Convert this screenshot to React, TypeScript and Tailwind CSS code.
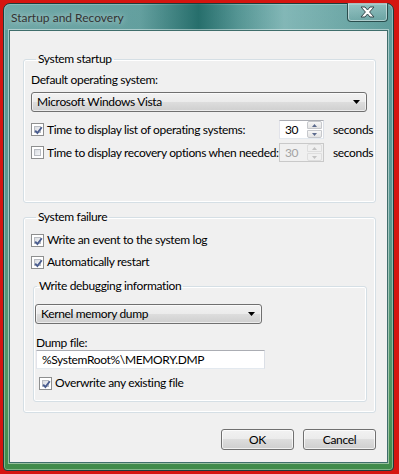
import React from 'react';

const font = { fontFamily: 'Lato, "Noto Sans", sans-serif' };

function CheckBox({ checked }: { checked?: boolean }) {
  return (
    <span className="relative inline-flex h-[13px] w-[13px] shrink-0 items-center justify-center border border-[#8e8f8f] bg-white p-[2px]">
      <span className="h-full w-full border border-[#b9bcc2] bg-[linear-gradient(135deg,#d9dce1_0%,#f4f5f7_100%)]" />
      {checked && (
        <svg className="absolute left-[1px] top-[1px]" width="11" height="11" viewBox="0 0 11 11">
          <path d="M2.2 5.6 L4.4 8 L8.8 2.2" fill="none" stroke="#4a5d8f" strokeWidth="1.9" />
        </svg>
      )}
    </span>
  );
}

function CheckRow({ checked, label }: { checked?: boolean; label: string }) {
  return (
    <div className="flex h-[16px] items-center">
      <CheckBox checked={checked} />
      <span className="ml-[3px] whitespace-nowrap leading-[16px]">{label}</span>
    </div>
  );
}

function Combo({ value, width }: { value: string; width: string }) {
  return (
    <div
      className={`flex h-[20px] ${width} items-center justify-between rounded-[3px] border border-[#707070] bg-[linear-gradient(#f2f2f2_0%,#ebebeb_50%,#dddddd_50%,#cfcfcf_100%)] pl-[5px] pr-[6px] shadow-[inset_0_0_0_1px_rgba(255,255,255,0.6)]`}
    >
      <span className="whitespace-nowrap leading-[16px]">{value}</span>
      <svg width="7" height="4" viewBox="0 0 7 4">
        <path d="M0 0 H7 L3.5 4 Z" fill="#000" />
      </svg>
    </div>
  );
}

function Spin({ value, disabled }: { value: string; disabled?: boolean }) {
  const arrow = disabled ? '#c3c3c3' : '#5b6a8d';
  return (
    <div
      className={`flex h-[19px] w-[45px] shrink-0 items-center justify-between border ${
        disabled
          ? 'border-[#c9c9c9] bg-[#f0f0f0] text-[#a3a3a3]'
          : 'border-[#abadb3] border-b-[#e3e9ef] border-l-[#e2e3ea] border-r-[#dbdfe6] bg-white text-black'
      }`}
    >
      <span className="pl-[5px] leading-[16px]">{value}</span>
      <div className="mr-[1px] flex h-[17px] w-[15px] flex-col">
        <div
          className={`flex h-[8px] items-center justify-center rounded-t-[2px] border ${
            disabled ? 'border-[#dedede]' : 'border-[#c6c8cc] bg-[linear-gradient(#f6f6f6,#e3e3e3)]'
          }`}
        >
          <svg width="5" height="3" viewBox="0 0 5 3">
            <path d="M0 3 L2.5 0 L5 3 Z" fill={arrow} />
          </svg>
        </div>
        <div
          className={`mt-[1px] flex h-[8px] items-center justify-center rounded-b-[2px] border ${
            disabled ? 'border-[#dedede]' : 'border-[#c6c8cc] bg-[linear-gradient(#f6f6f6,#e3e3e3)]'
          }`}
        >
          <svg width="5" height="3" viewBox="0 0 5 3">
            <path d="M0 0 L5 0 L2.5 3 Z" fill={arrow} />
          </svg>
        </div>
      </div>
    </div>
  );
}

function TimeRow({ checked, label, disabled }: { checked?: boolean; label: string; disabled?: boolean }) {
  return (
    <div className="flex h-[19px] items-center">
      <div className="flex w-[248px] shrink-0 items-center">
        <CheckBox checked={checked} />
        <span className="ml-[3px] whitespace-nowrap leading-[16px]">{label}</span>
      </div>
      <Spin value="30" disabled={disabled} />
      <span className="ml-[9px] whitespace-nowrap leading-[16px]">seconds</span>
    </div>
  );
}

function Button({ label }: { label: string }) {
  return (
    <button className="flex h-[21px] w-[73px] items-center justify-center rounded-[3px] border border-[#707070] bg-[linear-gradient(#f2f2f2_0%,#ebebeb_50%,#dddddd_50%,#cfcfcf_100%)] leading-[16px] text-black shadow-[inset_0_0_0_1px_rgba(255,255,255,0.7)]">
      {label}
    </button>
  );
}

export default function App() {
  return (
    <div className="h-[474px] w-[399px] bg-[#d51510] pb-[3px] pl-[3px] pr-[5px] pt-[3px] text-[12px] tracking-[-0.35px] text-black" style={font}>
      <div className="flex h-full w-full flex-col rounded-b-[4px] rounded-t-[7px] border border-[#1d3d3c] bg-[linear-gradient(180deg,#5f9d9c_0%,#5a9892_45%,#4f955f_85%,#3f8a49_100%)] px-[5px] pb-[7px] shadow-[inset_0_0_0_1px_rgba(255,255,255,0.35)]">
        {/* Title bar */}
        <div className="-mx-[5px] flex h-[26px] shrink-0 items-start justify-between rounded-t-[6px] bg-[linear-gradient(90deg,rgba(130,180,180,0.5)_0%,rgba(110,165,166,0.3)_35%,rgba(20,95,92,0.75)_50%,rgba(60,130,128,0.3)_60%,rgba(160,205,205,0.55)_72%,rgba(95,155,155,0.2)_100%)] pl-[7px] pr-[5px]">
          <span className="pt-[6px] text-[12px] leading-[16px] tracking-normal text-[#333] [text-shadow:0_0_6px_rgba(255,255,255,0.7)]">Startup and Recovery</span>
          <div className="-mt-[1px] flex h-[19px] w-[41px] items-center justify-center rounded-b-[4px] border border-t-0 border-[#2a4d4d] bg-[linear-gradient(rgba(200,230,230,0.45),rgba(120,170,170,0.35))] shadow-[inset_0_0_0_1px_rgba(255,255,255,0.45)]">
            <svg width="15" height="12" viewBox="0 0 15 12">
              <path
                d="M1 1 H5 L7.5 4 L10 1 H14 L9.6 6 L14 11 H10 L7.5 8 L5 11 H1 L5.4 6 Z"
                fill="#fff"
                stroke="#38494d"
                strokeWidth="1"
                strokeLinejoin="round"
              />
            </svg>
          </div>
        </div>

        {/* Client area */}
        <div className="flex min-w-0 flex-1 flex-col border border-[#3f6d6b] bg-[#f0f0f0] pl-[13px] pr-[11px] pt-[20px] shadow-[0_0_0_1px_rgba(255,255,255,0.45)]">
          <fieldset className="min-w-0 rounded-[3px] border border-[#d5dfe5] pb-[40px] pl-[7px] pr-[8px] pt-[5px] shadow-[inset_0_0_0_1px_#fff]">
            <legend className="ml-[5px] px-[2px] leading-[16px]">System startup</legend>
            <div className="leading-[16px]">Default operating system:</div>
            <div className="mt-[4px]">
              <Combo value="Microsoft Windows Vista" width="w-full" />
            </div>
            <div className="mt-[8px]">
              <TimeRow checked label="Time to display list of operating systems:" />
            </div>
            <div className="mt-[4px]">
              <TimeRow label="Time to display recovery options when needed:" disabled />
            </div>
          </fieldset>

          <fieldset className="mt-[6px] min-w-0 rounded-[3px] border border-[#d5dfe5] pb-[10px] pl-[7px] pr-[8px] pt-[7px] shadow-[inset_0_0_0_1px_#fff]">
            <legend className="ml-[5px] px-[2px] leading-[16px]">System failure</legend>
            <CheckRow checked label="Write an event to the system log" />
            <div className="mt-[6px]">
              <CheckRow checked label="Automatically restart" />
            </div>
            <fieldset className="ml-[2px] mt-[8px] min-w-0 rounded-[3px] border border-[#d5dfe5] pb-[10px] pl-[1px] pt-[10px] shadow-[inset_0_0_0_1px_#fff]">
              <legend className="ml-[2px] px-[2px] leading-[16px]">Write debugging information</legend>
              <Combo value="Kernel memory dump" width="w-[227px]" />
              <div className="ml-[1px] mt-[12px] leading-[14px]">Dump file:</div>
              <div className="ml-[1px] flex h-[19px] w-[229px] items-center border border-[#abadb3] border-b-[#e3e9ef] border-l-[#e2e3ea] border-r-[#dbdfe6] bg-white pl-[5px]">
                <span className="leading-[16px]">%SystemRoot%\MEMORY.DMP</span>
              </div>
              <div className="ml-[4px] mt-[6px]">
                <CheckRow checked label="Overwrite any existing file" />
              </div>
            </fieldset>
          </fieldset>

          <div className="mt-[16px] flex justify-end gap-[9px]">
            <Button label="OK" />
            <Button label="Cancel" />
          </div>
        </div>
      </div>
    </div>
  );
}
